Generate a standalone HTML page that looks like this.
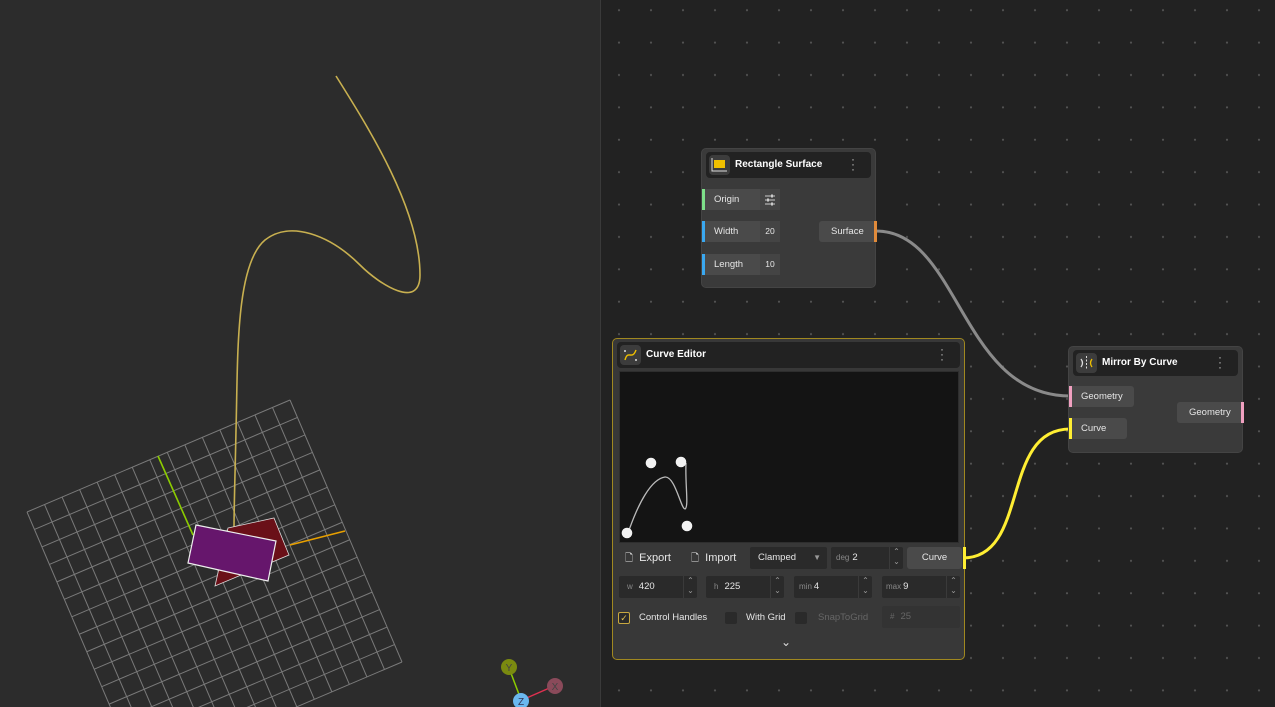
<!DOCTYPE html>
<html style="overflow:hidden;width:1275px;height:707px"><head><meta charset="utf-8"><style>
*{box-sizing:border-box;margin:0;padding:0}
body{width:1275px;height:707px;overflow:hidden;background:#222;font-family:"Liberation Sans",sans-serif;font-size:10px;color:#e6e6e6;position:relative}
#left{position:absolute;left:0;top:0;width:601px;height:707px;background:#2c2c2c;border-right:1px solid #3a3a3a}
#right{position:absolute;left:602px;top:0;width:673px;height:707px;background-color:#222;background-image:radial-gradient(circle,#555 0.8px,transparent 1.3px);background-size:32px 32.4px;background-position:1px -6px}
.node{position:absolute;background:#3a3a3a;border-radius:5px;border:1px solid #444}
.hdr{position:absolute;left:4px;right:4px;top:3px;height:26px;background:#222;border-radius:4px}
.hdr .ic{position:absolute;left:3px;top:3px;width:21px;height:20px;background:#3c3c3c;border-radius:4px}
.hdr .t{position:absolute;left:29px;top:7px;font-weight:bold;font-size:10px;color:#fff}
.hdr .m{position:absolute;right:17px;top:5px;color:#bbb;font-size:12px;line-height:5px;width:3px}
.pin{position:absolute;height:21px;background:#4a4a4a;border-radius:3px;font-size:9.5px;line-height:21px;padding-left:12px}
.pin b{position:absolute;left:0;top:0;width:3px;height:21px}
.val{position:absolute;right:0;top:0;width:20px;height:21px;background:#444;font-size:8.5px;text-align:center}
.fld{position:absolute;height:22px;background:#2a2a2a;border-radius:2px;font-size:9.5px;line-height:22px}
.fld .l{color:#888;font-size:8px;margin:0 6px 0 8px}
.sp{position:absolute;right:0;top:0;width:14px;height:22px;border-left:1px solid #3a3a3a;color:#999;font-size:8px;line-height:10px;text-align:center}
.cb{position:absolute;width:12px;height:12px;background:#2a2a2a;border-radius:2px}
</style></head><body>
<div id="left">
<svg width="601" height="707" style="position:absolute;left:0;top:0">
<g stroke="#7a7a7a" stroke-width="1" fill="none" id="grid"></g>
<path d="M336,76 C370,130 420,210 420,275 C420,310 380,285 360,265 C330,235 290,220 265,240 C235,265 238,360 236,430 C235,480 234,505 234,530" stroke="#c8b050" stroke-width="1.6" fill="none"/>
<line x1="158" y1="456" x2="193" y2="535" stroke="#8ccc00" stroke-width="1.6"/>
<line x1="290" y1="545" x2="345" y2="531" stroke="#e8a000" stroke-width="1.6"/>
<polygon points="228,528 274,518 289,555 215,586" fill="#6a1018" stroke="#ddd" stroke-width="0.8"/>
<polygon points="196,525 276,541 268,581 188,563" fill="#66166c" stroke="#eee" stroke-width="1.2"/>
<line x1="509" y1="668" x2="520" y2="697" stroke="#8ccc00" stroke-width="1.5"/>
<line x1="522" y1="700" x2="554" y2="686" stroke="#e03050" stroke-width="1.5"/>
<circle cx="509" cy="667" r="8" fill="#7a8a10"/><text x="509" y="671" font-size="10" fill="#444" text-anchor="middle" font-family="Liberation Sans">Y</text>
<circle cx="555" cy="686" r="8" fill="#8a4a5a"/><text x="555" y="690" font-size="10" fill="#444" text-anchor="middle" font-family="Liberation Sans">X</text>
<circle cx="521" cy="701" r="8" fill="#6ab8f0"/><text x="521" y="705" font-size="10" fill="#335" text-anchor="middle" font-family="Liberation Sans">Z</text>
</svg>
</div>
<div id="right"></div>
<svg width="1275" height="707" style="position:absolute;left:0;top:0">
<path d="M876,231 C960,231 960,396 1070,396" stroke="#8a8a8a" stroke-width="3" fill="none"/>
<path d="M963,558 C1030,558 1000,429 1070,429" stroke="#ffee33" stroke-width="3" fill="none"/>
</svg>

<div class="node" style="left:701px;top:148px;width:175px;height:140px">
<div class="hdr"><div class="ic"><svg width="21" height="20"><rect x="5" y="5" width="11" height="8" fill="#f0c000"/><path d="M3,3V16H18" stroke="#ddd" fill="none"/></svg></div><div class="t">Rectangle Surface</div><div class="m">·<br>·<br>·</div></div>
<div class="pin" style="left:0;top:40px;width:78px">Origin<b style="background:#7ee08a"></b><div class="val"><svg width="20" height="21"><path d="M5,7h10M5,11h10M5,15h10" stroke="#ccc"/><rect x="11" y="5.5" width="2" height="3" fill="#ccc"/><rect x="7" y="9.5" width="2" height="3" fill="#ccc"/><rect x="11" y="13.5" width="2" height="3" fill="#ccc"/></svg></div></div>
<div class="pin" style="left:0;top:72px;width:78px">Width<b style="background:#3aa8f0"></b><div class="val">20</div></div>
<div class="pin" style="left:0;top:105px;width:78px">Length<b style="background:#3aa8f0"></b><div class="val">10</div></div>
<div class="pin" style="left:117px;top:72px;width:58px">Surface<b style="left:auto;right:0;background:#e08a3a"></b></div>
</div>

<div class="node" style="left:1068px;top:346px;width:175px;height:107px">
<div class="hdr"><div class="ic"><svg width="21" height="20"><path d="M5,6q3,4 0,8" stroke="#ddd" fill="none" stroke-width="1.3"/><path d="M16,6q-3,4 0,8" stroke="#f0c000" fill="none" stroke-width="1.3"/><path d="M10.5,3v14" stroke="#ddd" stroke-dasharray="2 1.5"/></svg></div><div class="t">Mirror By Curve</div><div class="m">·<br>·<br>·</div></div>
<div class="pin" style="left:0;top:39px;width:65px">Geometry<b style="background:#f0a0c0"></b></div>
<div class="pin" style="left:0;top:71px;width:58px">Curve<b style="background:#ffee33"></b></div>
<div class="pin" style="left:108px;top:55px;width:67px">Geometry<b style="left:auto;right:0;background:#f0a0c0"></b></div>
</div>

<div class="node" style="left:612px;top:338px;width:353px;height:322px;border-color:#a08820;background:#383838">
<div class="hdr"><div class="ic"><svg width="21" height="20"><path d="M5,15 C8,4 12,16 16,5" stroke="#f0c000" fill="none" stroke-width="1.4"/><circle cx="5" cy="6" r="1" fill="#ddd"/><circle cx="16" cy="15" r="1" fill="#ddd"/></svg></div><div class="t">Curve Editor</div><div class="m">·<br>·<br>·</div></div>
<div style="position:absolute;left:6px;top:32px;width:340px;height:172px;background:#141414;border:1px solid #2e2e2e"></div>
<svg width="353" height="210" style="position:absolute;left:0;top:0">
<path d="M15,194 C25,165 38,140 52,138 C62,137 68,170 72,170 C76,168 72,145 73,124" stroke="#bbb" stroke-width="1.3" fill="none"/>
<circle cx="14" cy="194" r="5.3" fill="#f2f2f2"/><circle cx="38" cy="124" r="5.3" fill="#f2f2f2"/><circle cx="68" cy="123" r="5.3" fill="#f2f2f2"/><circle cx="74" cy="187" r="5.3" fill="#f2f2f2"/>
</svg>
<div style="position:absolute;left:12px;top:212px;font-size:11px"><span style="font-size:10px">🗋</span>&nbsp; Export</div>
<div style="position:absolute;left:78px;top:212px;font-size:11px"><span style="font-size:10px">🗋</span>&nbsp; Import</div>
<div class="fld" style="left:137px;top:208px;width:77px;padding-left:8px">Clamped<span style="position:absolute;right:6px;color:#999;font-size:8px">▼</span></div>
<div class="fld" style="left:218px;top:208px;width:72px"><span class="l" style="margin-left:5px;margin-right:3px">deg</span>2<div class="sp">⌃<br>⌄</div></div>
<div style="position:absolute;left:294px;top:208px;width:55px;height:22px;background:#4a4a4a;border-radius:3px;text-align:center;line-height:22px;font-size:9.5px">Curve</div>
<div style="position:absolute;left:350px;top:208px;width:3px;height:22px;background:#ffee33"></div>
<div class="fld" style="left:6px;top:237px;width:78px"><span class="l">w</span>420<div class="sp">⌃<br>⌄</div></div>
<div class="fld" style="left:93px;top:237px;width:78px"><span class="l">h</span>225<div class="sp">⌃<br>⌄</div></div>
<div class="fld" style="left:181px;top:237px;width:78px"><span class="l" style="margin-left:5px;margin-right:2px">min</span>4<div class="sp">⌃<br>⌄</div></div>
<div class="fld" style="left:269px;top:237px;width:78px"><span class="l" style="margin-left:4px;margin-right:2px">max</span>9<div class="sp">⌃<br>⌄</div></div>
<div class="cb" style="left:5px;top:273px;border:1px solid #c8a840;color:#e0c050;font-size:9px;line-height:10px;text-align:center">✓</div>
<div style="position:absolute;left:26px;top:273px;font-size:9.5px">Control Handles</div>
<div class="cb" style="left:112px;top:273px"></div>
<div style="position:absolute;left:133px;top:273px;font-size:9.5px">With Grid</div>
<div class="cb" style="left:182px;top:273px"></div>
<div style="position:absolute;left:205px;top:273px;font-size:9.5px;color:#666">SnapToGrid</div>
<div class="fld" style="left:269px;top:267px;width:78px;background:#333;color:#666"><span class="l" style="color:#666">#</span>25</div>
<div style="position:absolute;left:168px;top:296px;color:#ddd;font-size:12px">⌄</div>
</div>
<script>
var g=document.getElementById('grid'),o=[27,512],u=[(290-27)/15,(400-512)/15],v=[(402-290)/15,(662-400)/15],n=15,s='';
for(var i=0;i<=n;i++){s+='<line x1="'+(o[0]+u[0]*i)+'" y1="'+(o[1]+u[1]*i)+'" x2="'+(o[0]+u[0]*i+v[0]*n)+'" y2="'+(o[1]+u[1]*i+v[1]*n)+'"/>';
s+='<line x1="'+(o[0]+v[0]*i)+'" y1="'+(o[1]+v[1]*i)+'" x2="'+(o[0]+v[0]*i+u[0]*n)+'" y2="'+(o[1]+v[1]*i+u[1]*n)+'"/>';}
g.innerHTML=s;
</script>
</body></html>
